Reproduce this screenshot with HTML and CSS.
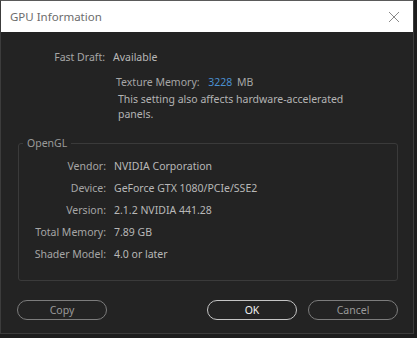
FILE: index.html
```html
<!DOCTYPE html>
<html lang="en">
<head>
    <meta charset="UTF-8">
    <title>GPU Information</title>
    <link rel="stylesheet" href="styles.css">
</head>
<body>
    <div class="window">
        <div class="titlebar">
            <span class="title">GPU Information</span>
            <svg class="close" width="12" height="12" viewBox="0 0 12 12">
                <path d="M1 1L11 11M11 1L1 11" stroke="#8a8a8a" stroke-width="1" fill="none"/>
            </svg>
        </div>
        <div class="body">
            <div class="row top">
                <span class="label">Fast Draft:</span>
                <span class="value">Available</span>
            </div>
            <div class="texture">
                <div class="texture-line">Texture Memory: <span class="num">3228</span> MB</div>
                <p class="note">This setting also affects hardware-accelerated<br>panels.</p>
            </div>
            <fieldset class="group">
                <legend>OpenGL</legend>
                <div class="row"><span class="label">Vendor:</span><span class="value">NVIDIA Corporation</span></div>
                <div class="row"><span class="label">Device:</span><span class="value">GeForce GTX 1080/PCIe/SSE2</span></div>
                <div class="row"><span class="label">Version:</span><span class="value">2.1.2 NVIDIA 441.28</span></div>
                <div class="row"><span class="label">Total Memory:</span><span class="value">7.89 GB</span></div>
                <div class="row"><span class="label">Shader Model:</span><span class="value">4.0 or later</span></div>
            </fieldset>
            <div class="buttons">
                <button class="btn">Copy</button>
                <span class="spacer"></span>
                <button class="btn primary">OK</button>
                <button class="btn">Cancel</button>
            </div>
        </div>
    </div>
</body>
</html>
```

FILE: styles.css
```css
*, *:before, *:after {
    margin: 0;
    padding: 0;
    box-sizing: border-box;
}
body {
    background: #1d1d1d;
    font-family: "Noto Sans", "Open Sans", sans-serif;
    font-size: 10.5px;
    color: #b4b4b4;
    width: 417px;
    height: 338px;
    overflow: hidden;
}
.window {
    width: 414px;
    height: 334px;
    background: #232323;
    border: 1px solid #3c3c3c;
    border-top-color: #5a5a5a;
}
.titlebar {
    height: 31px;
    background: #ffffff;
    display: flex;
    align-items: center;
    justify-content: space-between;
    padding: 0 13px 0 9px;
}
.title {
    font-size: 11.5px;
    color: #6c6c6c;
}
.close {
    display: block;
}
.body {
    padding: 14px 15px 0 16px;
}
.row {
    display: grid;
    grid-template-columns: 88px auto;
    column-gap: 8px;
    line-height: 22px;
    white-space: nowrap;
}
.label {
    text-align: right;
    color: #a6a6a6;
}
.value {
    color: #b8b8b8;
}
.texture {
    margin: 4px 0 0 99px;
}
.texture-line {
    line-height: 20px;
    color: #a6a6a6;
}
.num {
    color: #4a8fd0;
    margin: 0 2px 0 6px;
}
.note {
    line-height: 15px;
    padding-left: 2px;
}
.group {
    margin: 14px 0 0 1px;
    width: 380px;
    border: 1px solid #3a3a3a;
    border-radius: 3px;
    padding: 5px 0 15px 0;
}
.group legend {
    margin-left: 4px;
    padding: 0 4px;
    color: #9a9a9a;
    line-height: 14px;
}
.group .row {
    grid-template-columns: 87px auto;
}
.buttons {
    display: flex;
    gap: 11px;
    margin-top: 19px;
}
.spacer {
    flex: 1;
}
.btn {
    width: 90px;
    height: 20px;
    border: 1px solid #7c7c7c;
    border-radius: 10px;
    background: transparent;
    color: #9a9a9a;
    font-family: inherit;
    font-size: 10.5px;
}
.btn.primary {
    border-color: #c4c4c4;
    color: #f0f0f0;
}
```
